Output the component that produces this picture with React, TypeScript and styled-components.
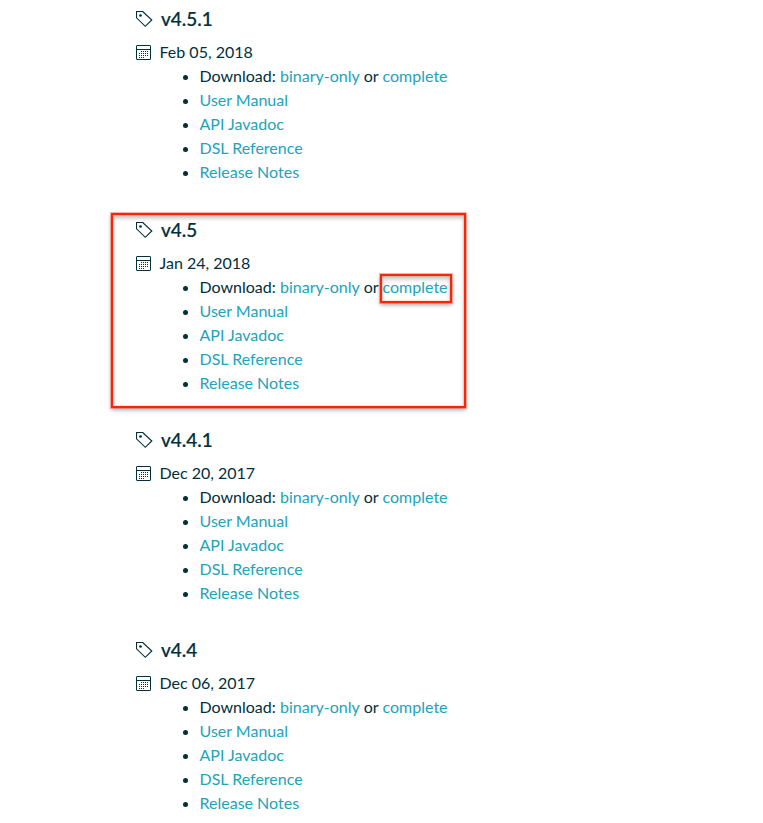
import React from "react";
import styled, { createGlobalStyle } from "styled-components";

const Global = createGlobalStyle`
  * { box-sizing: border-box; }
  body { margin: 0; background: #fff; overflow: hidden; }
`;
const Page = styled.main`
  height: 823px;
  overflow: hidden;
  padding-left: 136px;
  font: 400 16px/24px Lato, sans-serif;
  color: #00303c;
`;
const Release = styled.section<{ $height: number }>`
  position: relative;
  height: ${(p) => p.$height}px;
`;
const Version = styled.h3`
  display: flex;
  align-items: center;
  gap: 8px;
  margin: 0;
  padding-top: 4px;
  height: 34px;
  font-size: 18.9px;
  font-weight: 500;
  -webkit-text-stroke: 0.2px #00303c;
`;
const DateRow = styled.div`
  display: flex;
  align-items: center;
  gap: 8.5px;
  height: 24px;
  margin-top: 6px;
`;
const Links = styled.ul`
  margin: 0;
  padding-left: 63.5px;
`;
const Download = styled.li`
  word-spacing: 0.2px;
`;
const Link = styled.a`
  color: #22a3ba;
  text-decoration: none;
`;
const Outline = styled.div<{ $x: number; $y: number; $w: number; $h: number }>`
  position: absolute;
  left: ${(p) => p.$x}px;
  top: ${(p) => p.$y}px;
  width: ${(p) => p.$w}px;
  height: ${(p) => p.$h}px;
  border: 2px solid #fb2408;
  box-shadow: 0 0 0 1px rgba(251, 60, 30, 0.35), 0 2px 4px rgba(0, 0, 0, 0.35),
    inset 0 0 0 1px rgba(251, 60, 30, 0.15), inset 0 3px 4px rgba(0, 0, 0, 0.25);
  pointer-events: none;
`;

const TagIcon = () => (
  <svg width="17" height="17" viewBox="0 0 17 17" fill="none" stroke="#00303c" strokeWidth="1.15">
    <path d="M.5.5h6.2L15.8 9 9.3 15.3.5 6.8z" />
    <circle cx="4.5" cy="4.5" r="1.35" fill="#00303c" stroke="none" />
  </svg>
);
const CalendarIcon = () => (
  <svg width="15" height="15" viewBox="0 0 15 15" fill="none" stroke="#00303c">
    <rect x=".5" y=".5" width="14" height="14" rx=".5" />
    <path d="M0 4.5h15" />
    <path d="M5 6.5h8M3 8.5h10M3 10.5h10M3 12.5h6" strokeDasharray="1 1" />
  </svg>
);

const releases = [
  { version: "v4.5.1", date: "Feb 05, 2018", height: 211 },
  { version: "v4.5", date: "Jan 24, 2018", height: 210, marked: true },
  { version: "v4.4.1", date: "Dec 20, 2017", height: 210 },
  { version: "v4.4", date: "Dec 06, 2017", height: 192 },
];

export default function App() {
  return (
    <Page>
      <Global />
      {releases.map((r) => (
        <Release key={r.version} $height={r.height}>
          <Version><TagIcon />{r.version}</Version>
          <DateRow><CalendarIcon />{r.date}</DateRow>
          <Links>
            <Download>Download: <Link>binary-only</Link> or <Link>complete</Link></Download>
            <li><Link>User Manual</Link></li>
            <li><Link>API Javadoc</Link></li>
            <li><Link>DSL Reference</Link></li>
            <li><Link>Release Notes</Link></li>
          </Links>
          {r.marked && (
            <>
              <Outline $x={-25} $y={2} $w={355} $h={195} />
              <Outline $x={244} $y={63} $w={72} $h={29} />
            </>
          )}
        </Release>
      ))}
    </Page>
  );
}
